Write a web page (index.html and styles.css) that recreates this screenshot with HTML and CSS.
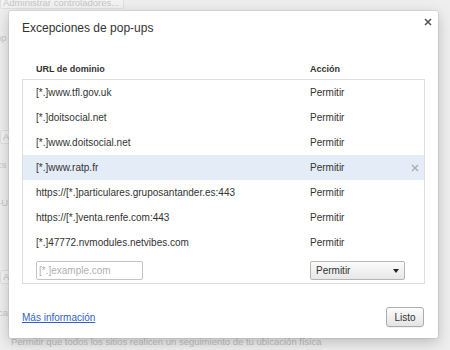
FILE: index.html
```html
<!DOCTYPE html>
<html>
<head>
  <meta charset="utf-8">
  <link rel="stylesheet" href="styles.css">
</head>
<body>
  <div class="page">
    <div class="page-btn page-top">Administrar controladores...</div>
    <div class="page-line page-np">np</div>
    <div class="page-btn page-a1">A</div>
    <div class="page-line page-cs">cs</div>
    <div class="page-line page-u">-U</div>
    <div class="page-btn page-a2">A</div>
    <div class="page-line page-ca">ca</div>
    <div class="page-line page-foot">Permitir que todos los sitios realicen un seguimiento de tu ubicación física</div>
  </div>

  <div class="dialog">
    <div class="dialog-title">Excepciones de pop-ups</div>
    <button class="close" title="Cerrar">
      <svg width="8" height="8" viewBox="0 0 8 8"><path d="M1 1 L7 7 M7 1 L1 7" stroke="#555" stroke-width="1.6" fill="none"/></svg>
    </button>

    <div class="list-head">
      <span class="col-url">URL de dominio</span>
      <span class="col-action">Acción</span>
    </div>

    <div class="list">
      <div class="row"><span class="col-url">[*.]www.tfl.gov.uk</span><span class="col-action">Permitir</span></div>
      <div class="row"><span class="col-url">[*.]doitsocial.net</span><span class="col-action">Permitir</span></div>
      <div class="row"><span class="col-url">[*.]www.doitsocial.net</span><span class="col-action">Permitir</span></div>
      <div class="row row-selected">
        <span class="col-url">[*.]www.ratp.fr</span><span class="col-action">Permitir</span>
        <span class="row-delete">
          <svg width="8" height="8" viewBox="0 0 8 8"><path d="M1 1 L7 7 M7 1 L1 7" stroke="#a8a8a8" stroke-width="1.2" fill="none"/></svg>
        </span>
      </div>
      <div class="row"><span class="col-url">https://[*.]particulares.gruposantander.es:443</span><span class="col-action">Permitir</span></div>
      <div class="row"><span class="col-url">https://[*.]venta.renfe.com:443</span><span class="col-action">Permitir</span></div>
      <div class="row"><span class="col-url">[*.]47772.nvmodules.netvibes.com</span><span class="col-action">Permitir</span></div>
      <div class="row row-new">
        <span class="col-url"><input class="url-input" type="text" placeholder="[*.]example.com"></span>
        <div class="select">Permitir<span class="arrow"></span></div>
      </div>
    </div>

    <div class="dialog-foot">
      <a class="more" href="#">Más información</a>
      <button class="done">Listo</button>
    </div>
  </div>
</body>
</html>
```

FILE: styles.css
```css
body {
  margin: 0;
  padding: 0;
  width: 450px;
  height: 350px;
  overflow: hidden;
  position: relative;
  background-color: #eeeeee;
  font-family: "Liberation Sans", Arial, Helvetica, sans-serif;
  font-size: 10px;
  color: #333;
}

/* settings page behind the overlay */
.page {
  display: flex;
  flex-direction: column;
  align-items: flex-start;
  color: #c6c6c6;
  font-size: 9.5px;
}

.page-line,
.page-btn {
  height: 14px;
  line-height: 14px;
  white-space: nowrap;
}

.page-btn {
  box-sizing: border-box;
  width: 12px;
  padding: 0 2px;
  border: 1px solid #e0e0e0;
  border-radius: 2px;
  background-color: #f2f2f2;
  line-height: 12px;
}

.page-top {
  width: 124px;
  height: 12px;
  margin-top: -3px;
  line-height: 10px;
}

.page-np { margin-top: 22px; margin-left: -4px; }
.page-a1 { margin-top: 85px; }
.page-cs { margin-top: 14px; margin-left: -3px; }
.page-u  { margin-top: 24px; margin-left: -2px; }
.page-a2 { margin-top: 60px; }
.page-ca { margin-top: 22px; margin-left: -2px; }
.page-foot { margin-top: 15px; margin-left: 11px; color: #bdbdbd; }

/* dialog */
.dialog {
  position: absolute;
  left: 9px;
  top: 11px;
  width: 429px;
  height: 327px;
  box-sizing: border-box;
  padding: 0 13px 11px;
  background-color: #fff;
  border-radius: 2px;
  box-shadow: 0 0 0 1px rgba(0, 0, 0, 0.06), 0 4px 14px rgba(0, 0, 0, 0.22);
  display: flex;
  flex-direction: column;
}

.dialog-title {
  margin-top: 9px;
  height: 16px;
  line-height: 16px;
  font-size: 12px;
  color: #333;
}

.close {
  position: absolute;
  top: 7px;
  right: 6px;
  width: 8px;
  height: 8px;
  padding: 0;
  border: none;
  background: none;
  display: flex;
}

.list-head {
  display: flex;
  margin-top: 25px;
  padding-left: 14px;
  height: 16px;
  line-height: 16px;
  font-size: 9px;
  font-weight: bold;
  color: #333;
}

.list-head .col-url {
  width: 274px;
}

.list {
  margin-top: 2px;
  border: 1px solid #dedede;
}

.row {
  display: flex;
  align-items: center;
  height: 25px;
  padding-left: 13px;
  padding-right: 5px;
  white-space: nowrap;
}

.row .col-url {
  width: 274px;
}

.row-selected {
  background-color: #e4ecf7;
}

.row-delete {
  margin-left: auto;
  display: flex;
}

.row-new {
  height: 28px;
  align-items: flex-start;
  padding-top: 6px;
  box-sizing: border-box;
}

.url-input {
  box-sizing: border-box;
  width: 107px;
  height: 19px;
  margin: 0;
  padding: 0 2px;
  border: 1px solid #c4c4c4;
  border-radius: 2px;
  font-family: inherit;
  font-size: 10px;
  color: #333;
  outline: none;
}

.url-input::placeholder {
  color: #b0b0b0;
}

.select {
  box-sizing: border-box;
  width: 95px;
  height: 19px;
  line-height: 17px;
  padding-left: 5px;
  border: 1px solid #b5b5b5;
  border-radius: 2px;
  background: linear-gradient(#fbfbfb, #e7e7e7);
  display: flex;
  align-items: center;
}

.arrow {
  margin-left: auto;
  margin-right: 5px;
  width: 0;
  height: 0;
  border-left: 3px solid transparent;
  border-right: 3px solid transparent;
  border-top: 4px solid #222;
}

.dialog-foot {
  margin-top: auto;
  display: flex;
  align-items: center;
  justify-content: space-between;
}

.more {
  color: #3262c6;
  font-size: 10px;
}

.done {
  box-sizing: border-box;
  width: 38px;
  height: 20px;
  margin-right: 1px;
  padding: 0;
  border: 1px solid #acacac;
  border-radius: 3px;
  background: linear-gradient(#fcfcfc, #e4e4e4);
  box-shadow: 0 1px 0 rgba(0, 0, 0, 0.05);
  font-family: inherit;
  font-size: 10px;
  color: #333;
}
```
